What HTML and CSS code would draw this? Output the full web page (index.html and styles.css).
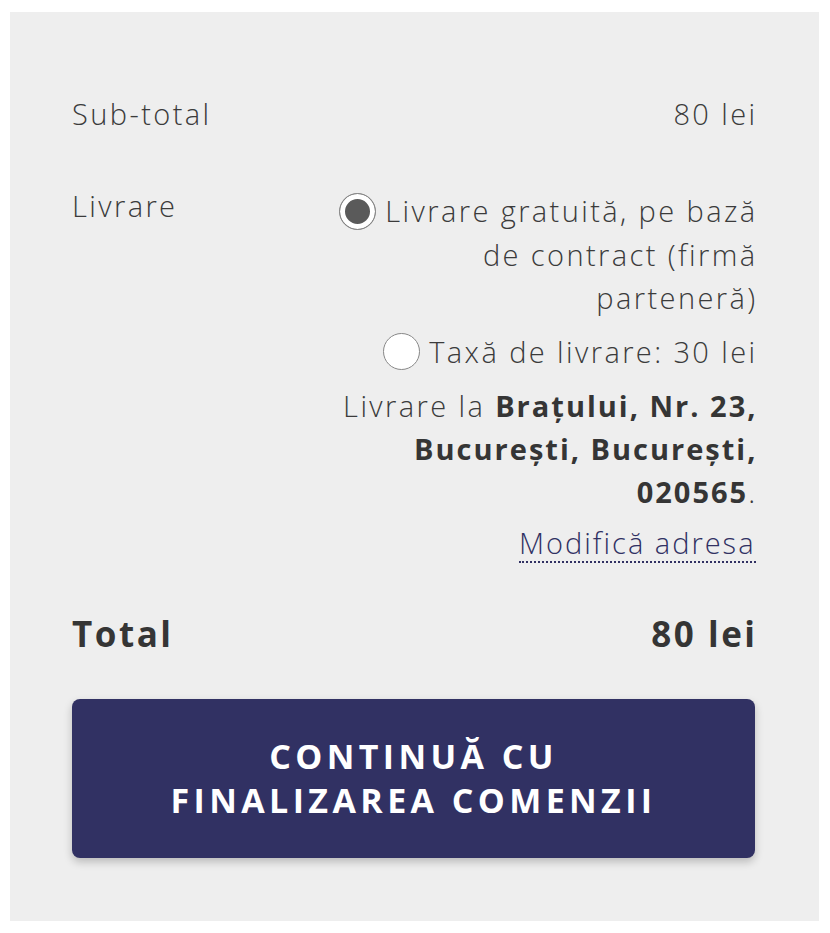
FILE: index.html
```html
<!DOCTYPE html>
<html lang="ro">
<head>
    <meta charset="UTF-8">
    <meta name="viewport" content="width=device-width, initial-scale=1.0">
    <title>Coș</title>
    <link rel="stylesheet" href="styles.css">
</head>
<body>
    <div class="summary">
        <div class="row subtotal">
            <span class="label">Sub-total</span>
            <span class="value">80 lei</span>
        </div>
        <div class="row shipping">
            <span class="label">Livrare</span>
            <div class="options">
                <label class="option">
                    <input type="radio" name="shipping" value="contract" checked>Livrare gratuită, pe bază de contract (firmă parteneră)
                </label>
                <label class="option">
                    <input type="radio" name="shipping" value="taxa">Taxă de livrare: 30 lei
                </label>
                <p class="address">Livrare la <strong>Brațului, Nr. 23, București, București, 020565</strong>.</p>
                <a href="#" class="change-address">Modifică adresa</a>
            </div>
        </div>
        <div class="row total">
            <span class="label">Total</span>
            <span class="value">80 lei</span>
        </div>
        <button type="button" class="checkout">Continuă cu finalizarea comenzii</button>
    </div>
</body>
</html>
```

FILE: styles.css
```css
body {
    margin: 0;
    padding: 12px 11px 13px 10px;
    background-color: #fff;
    font-family: "Open Sans", Inter, sans-serif;
    color: #3b3b3b;
}
.summary {
    background-color: #eeeeee;
    padding: 80px 64px 63px 62px;
}
.row {
    display: flex;
    justify-content: space-between;
    font-size: 29px;
    font-weight: 300;
    line-height: 43px;
    letter-spacing: 2.4px;
}
.row .value,
.options {
    margin-right: -2.5px;
}
.shipping {
    margin-top: 49px;
}
.options {
    width: 425px;
    text-align: right;
    padding-top: 5px;
}
.option {
    display: block;
    margin-bottom: 11px;
    cursor: pointer;
}
.option input {
    appearance: none;
    -webkit-appearance: none;
    width: 37px;
    height: 37px;
    margin: 0 9px 0 0;
    border: 1px solid #888;
    border-radius: 50%;
    background-color: #fff;
    vertical-align: middle;
    position: relative;
    top: -3px;
}
.option input:checked {
    background-color: #5a5a5a;
    box-shadow: inset 0 0 0 5px #fff;
}
.address {
    margin: 0;
}
.address strong {
    font-weight: 700;
    letter-spacing: 2px;
    color: #353535;
}
.change-address {
    display: inline-block;
    margin-top: 12px;
    margin-right: 2px;
    color: #313163;
    text-decoration: none;
    letter-spacing: 2px;
    border-bottom: 2px dotted #313163;
    line-height: 36px;
}
.total {
    margin-top: 48px;
    font-size: 35px;
    font-weight: 700;
    letter-spacing: 2.5px;
    color: #353535;
}
.checkout {
    display: block;
    width: 100%;
    margin-top: 44px;
    padding: 35px 80px 36px;
    background-color: #313163;
    color: #fff;
    border: none;
    border-radius: 8px;
    box-shadow: 0 4px 8px rgba(0, 0, 0, 0.22);
    font-family: inherit;
    font-size: 34px;
    font-weight: 700;
    line-height: 44px;
    letter-spacing: 4.4px;
    text-transform: uppercase;
    cursor: pointer;
}
```
